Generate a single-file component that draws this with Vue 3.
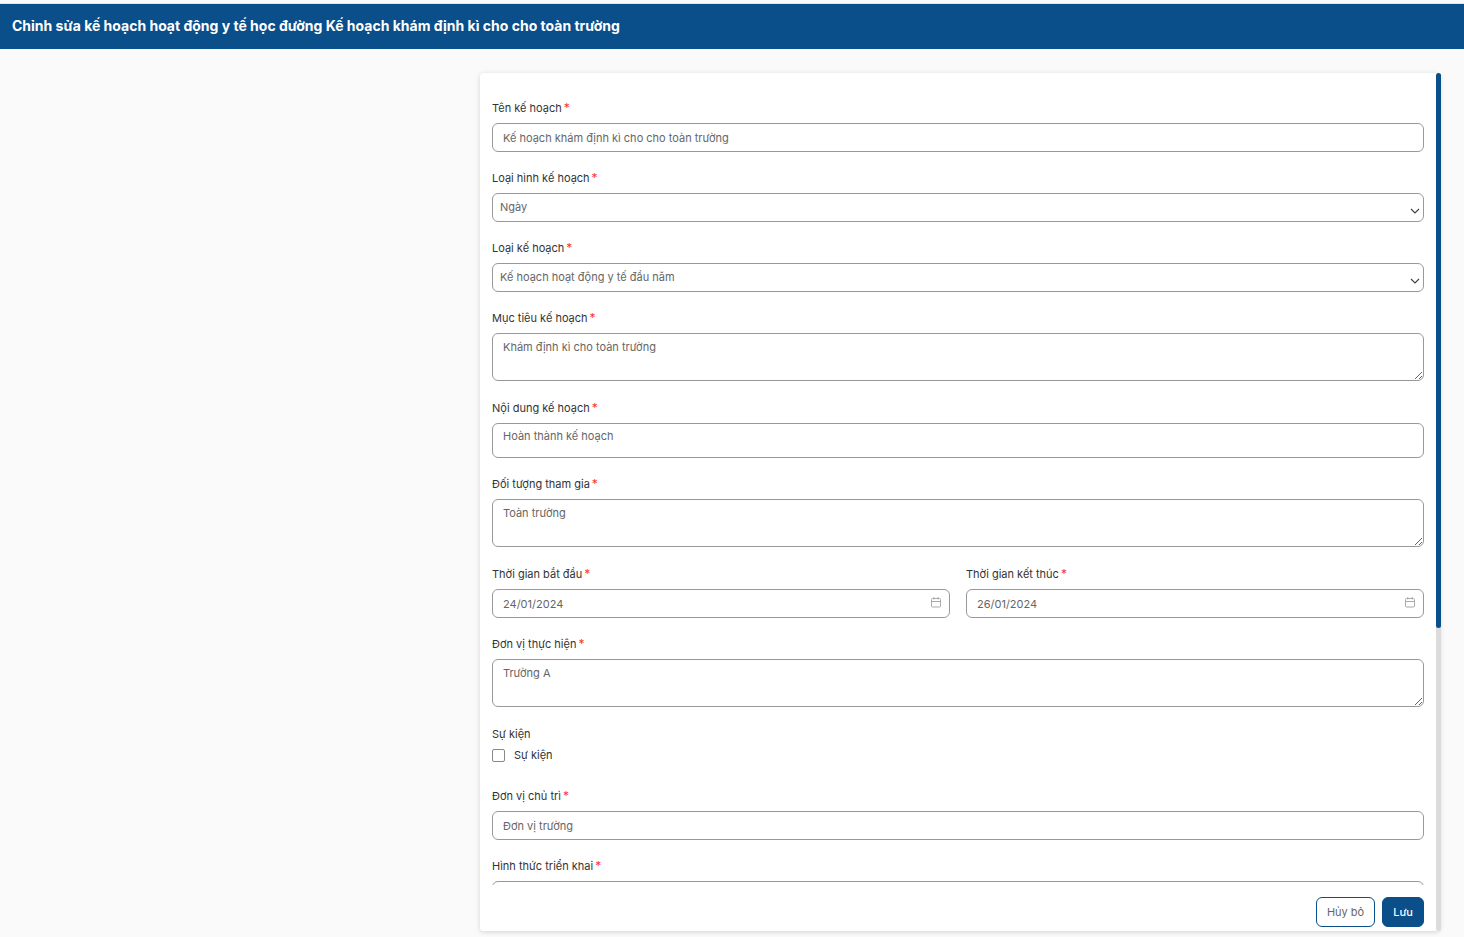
<script setup>
import { onBeforeUnmount, onMounted, reactive, ref } from 'vue'

const form = reactive({
  name: 'Kế hoạch khám định kì cho cho toàn trường',
  period: 'Ngày',
  type: 'Kế hoạch hoạt động y tế đầu năm',
  goal: 'Khám định kì cho toàn trường',
  content: 'Hoàn thành kế hoạch',
  audience: 'Toàn trường',
  start: '24/01/2024',
  end: '26/01/2024',
  unit: 'Trường A',
  event: false,
  host: 'Đơn vị trường',
  method: '',
})

const scroller = ref(null)
const thumb = reactive({ top: 0, size: 100 })

function updateThumb() {
  const el = scroller.value
  thumb.size = (el.clientHeight / el.scrollHeight) * 100
  thumb.top = (el.scrollTop / el.scrollHeight) * 100
}

onMounted(() => {
  updateThumb()
  window.addEventListener('resize', updateThumb)
})
onBeforeUnmount(() => window.removeEventListener('resize', updateThumb))
</script>

<template>
  <div class="page">
    <header class="topbar">
      <h1>Chỉnh sửa kế hoạch hoạt động y tế học đường Kế hoạch khám định kì cho cho toàn trường</h1>
    </header>

    <main class="layout">
      <div class="card">
        <form ref="scroller" class="scroller" @scroll="updateThumb" @submit.prevent>
          <div class="fields">
            <div class="field">
              <label for="name">Tên kế hoạch<span class="req">*</span></label>
              <input id="name" v-model="form.name" class="control" type="text" />
            </div>

            <div class="field">
              <label for="period">Loại hình kế hoạch<span class="req">*</span></label>
              <div class="wrap">
                <select id="period" v-model="form.period" class="control">
                  <option>{{ form.period }}</option>
                </select>
                <svg class="chevron" viewBox="0 0 10 6" aria-hidden="true"><path d="M1 1l4 4 4-4" /></svg>
              </div>
            </div>

            <div class="field">
              <label for="type">Loại kế hoạch<span class="req">*</span></label>
              <div class="wrap">
                <select id="type" v-model="form.type" class="control">
                  <option>{{ form.type }}</option>
                </select>
                <svg class="chevron" viewBox="0 0 10 6" aria-hidden="true"><path d="M1 1l4 4 4-4" /></svg>
              </div>
            </div>

            <div class="field">
              <label for="goal">Mục tiêu kế hoạch<span class="req">*</span></label>
              <textarea id="goal" v-model="form.goal" class="control"></textarea>
            </div>

            <div class="field">
              <label for="content">Nội dung kế hoạch<span class="req">*</span></label>
              <textarea id="content" v-model="form.content" class="control compact"></textarea>
            </div>

            <div class="field">
              <label for="audience">Đối tượng tham gia<span class="req">*</span></label>
              <textarea id="audience" v-model="form.audience" class="control"></textarea>
            </div>

            <div class="row">
              <div class="field">
                <label for="start">Thời gian bắt đầu<span class="req">*</span></label>
                <div class="wrap">
                  <input id="start" v-model="form.start" class="control" type="text" />
                  <svg class="calendar" viewBox="0 0 10 11" aria-hidden="true">
                    <rect x=".5" y="1.5" width="9" height="8.5" rx="1" />
                    <path d="M.5 4.5h9M2.8 0v2.5M7.2 0v2.5" />
                  </svg>
                </div>
              </div>
              <div class="field">
                <label for="end">Thời gian kết thúc<span class="req">*</span></label>
                <div class="wrap">
                  <input id="end" v-model="form.end" class="control" type="text" />
                  <svg class="calendar" viewBox="0 0 10 11" aria-hidden="true">
                    <rect x=".5" y="1.5" width="9" height="8.5" rx="1" />
                    <path d="M.5 4.5h9M2.8 0v2.5M7.2 0v2.5" />
                  </svg>
                </div>
              </div>
            </div>

            <div class="field">
              <label for="unit">Đơn vị thực hiện<span class="req">*</span></label>
              <textarea id="unit" v-model="form.unit" class="control"></textarea>
            </div>

            <fieldset class="event">
              <legend>Sự kiện</legend>
              <label class="check">
                <input v-model="form.event" type="checkbox" />
                <span>Sự kiện</span>
              </label>
            </fieldset>

            <div class="field">
              <label for="host">Đơn vị chủ trì<span class="req">*</span></label>
              <input id="host" v-model="form.host" class="control" type="text" />
            </div>

            <div class="field">
              <label for="method">Hình thức triển khai<span class="req">*</span></label>
              <input id="method" v-model="form.method" class="control" type="text" />
            </div>
          </div>

          <footer class="actions">
            <button type="button" class="btn">Hủy bỏ</button>
            <button type="submit" class="btn primary">Lưu</button>
          </footer>
        </form>
        <div class="rail" aria-hidden="true">
          <div class="thumb" :style="{ top: thumb.top + '%', height: thumb.size + '%' }"></div>
        </div>
      </div>
    </main>
  </div>
</template>

<style>
body {
  margin: 0;
  background: #fafafa;
}
</style>

<style scoped>
.page {
  box-sizing: border-box;
  height: 100vh;
  display: flex;
  flex-direction: column;
  font-family: Inter, Roboto, "Liberation Sans", sans-serif;
  font-size: 11px;
  color: #333;
}
.page * {
  box-sizing: border-box;
}
.topbar {
  margin-top: 3px;
  padding: 0 12px 1px;
  border-top: 1px solid #e4e4e4;
  background: #0a4e8a;
}
h1 {
  margin: 0;
  font-size: 14px;
  font-weight: 700;
  line-height: 44px;
  color: #fff;
}
.layout {
  flex: 1;
  min-height: 0;
  display: grid;
  grid-template-columns: 1fr 2fr;
  grid-template-rows: minmax(0, 1fr);
  padding: 24px 24px 6px 0;
}
.card {
  grid-column: 2;
  display: flex;
  min-height: 0;
  border-radius: 4px;
  background: #fff;
  box-shadow: 0 1px 5px rgba(0, 0, 0, 0.16);
}
.scroller {
  flex: 1;
  min-width: 0;
  overflow-y: auto;
  border-radius: 4px 0 0 4px;
  scrollbar-width: none;
}
.rail {
  position: relative;
  width: 5px;
  margin-right: -1px;
  border-radius: 3px;
  background: #dcdcdc;
}
.thumb {
  position: absolute;
  left: 0;
  width: 100%;
  border-radius: 3px;
  background: #0a4e8a;
}
.fields {
  display: flex;
  flex-direction: column;
  gap: 16px;
  padding: 25px 12px 444px;
}
.field {
  display: flex;
  flex-direction: column;
  gap: 5px;
}
.field > label {
  line-height: 20px;
}
.req {
  margin-left: 2px;
  font-size: 12px;
  line-height: 1;
  color: #f33;
}
.row {
  display: grid;
  grid-template-columns: 1fr 1fr;
  gap: 16px;
}
.wrap {
  position: relative;
  display: flex;
}
.control {
  width: 100%;
  height: 29px;
  margin: 0;
  padding: 0 10px;
  border: 1px solid #999;
  border-radius: 6px;
  background: #fff;
  font: inherit;
  color: #666;
  outline: none;
}
select.control {
  appearance: none;
  padding: 0 7px 2px;
}
textarea.control {
  display: block;
  height: 48px;
  margin-bottom: 1px;
  padding: 4px 10px;
  line-height: 18px;
  resize: vertical;
}
textarea.compact {
  height: 35px;
  margin-bottom: 0;
  padding: 3px 10px;
  resize: none;
  overflow: hidden;
}
.chevron {
  position: absolute;
  right: 4px;
  bottom: 8px;
  width: 10px;
  height: 6px;
  fill: none;
  stroke: #444;
  stroke-width: 1.2;
  pointer-events: none;
}
.calendar {
  position: absolute;
  right: 9px;
  top: 8px;
  width: 10px;
  height: 11px;
  fill: none;
  stroke: #aaa;
  pointer-events: none;
}
.event {
  display: flex;
  flex-direction: column;
  min-width: 0;
  margin: 0;
  padding: 0 0 4px;
  border: 0;
}
legend {
  padding: 0;
  line-height: 20px;
}
.check {
  display: flex;
  align-items: center;
  gap: 9px;
  line-height: 22px;
}
.check input {
  appearance: none;
  width: 13px;
  height: 13px;
  margin: 0;
  border: 1px solid #888;
  border-radius: 2px;
  background: #fff;
}
.check input:checked {
  background: #0a4e8a;
}
.actions {
  position: sticky;
  bottom: 0;
  display: flex;
  justify-content: flex-end;
  gap: 7px;
  padding: 12px 12px 4px;
  background: #fff;
}
.btn {
  height: 30px;
  padding: 0 10px;
  border: 1px solid #0a4e8a;
  border-radius: 6px;
  background: #fff;
  font: inherit;
  color: #666;
}
.btn.primary {
  background: #0a4e8a;
  font-weight: 500;
  color: #fff;
}
</style>
